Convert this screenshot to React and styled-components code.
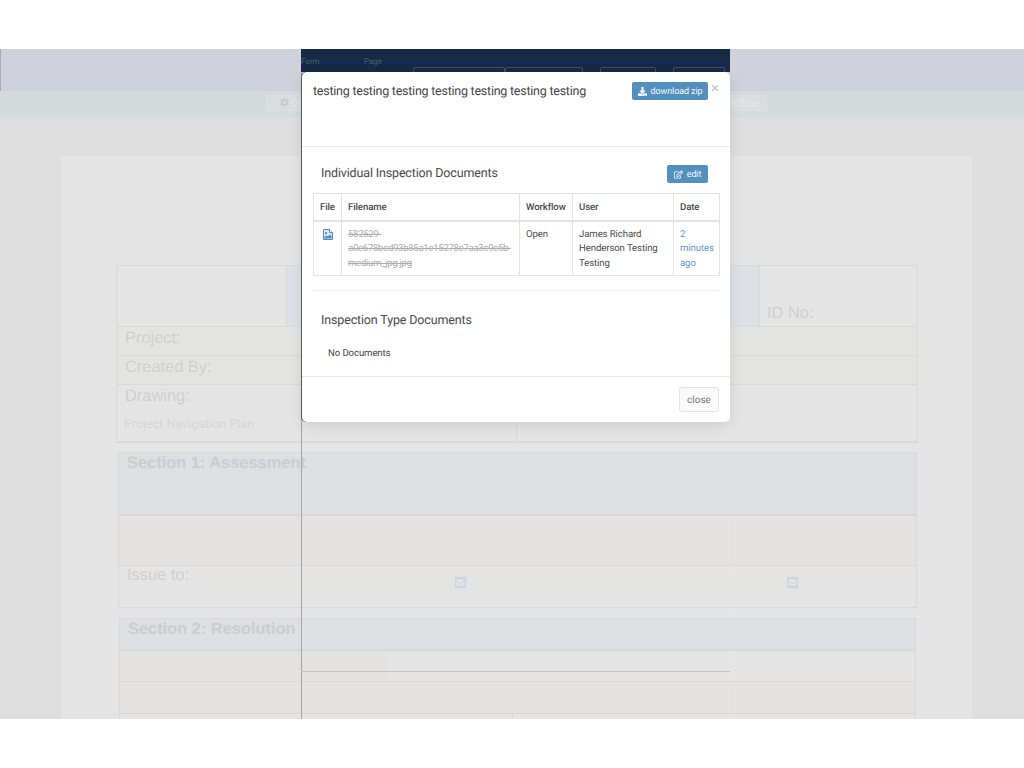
import styled, { createGlobalStyle } from "styled-components";
import { FaCog, FaDownload, FaEnvelopeSquare, FaRegEdit } from "react-icons/fa";

const GlobalStyle = createGlobalStyle`
  html, body {
    margin: 0;
    padding: 0;
    background: #fff;
    text-rendering: geometricPrecision;
  }
  * {
    box-sizing: border-box;
  }
`;

const Stage = styled.div`
  position: relative;
  height: 670px;
  margin: 49px 0;
  overflow: hidden;
  background: #dedede;
  font-family: "Liberation Sans", Arial, sans-serif;
`;

const TopBar = styled.div`
  height: 42px;
  background: #cfd2db;
  border-left: 1px solid #a9adb8;
`;

const SubBar = styled.div`
  height: 26px;
  background: #d5dadd;
  display: flex;
  justify-content: center;
  padding: 4px 257px 0 266px;
`;

const SubBarButton = styled.div`
  flex: 1;
  height: 16px;
  border: 1px solid #dde1e3;
  border-radius: 2px;
  background: #d9dde0;
  display: flex;
  align-items: center;
  justify-content: space-between;
  padding: 0 7px 0 13px;
  font: 11px Roboto, sans-serif;
  color: #e6e8ea;

  svg {
    color: #c9cdd0;
    font-size: 9px;
    margin-right: 3px;
  }
`;

const Paper = styled.div`
  width: 911px;
  height: 600px;
  margin: 39px 0 0 61px;
  background: #e4e4e4;
  padding: 109px 0 0 55px;
`;

const FormTable = styled.div`
  width: 802px;
  border: 1px solid #d9d9d9;
  border-bottom-width: 2px;
`;

const FormRow = styled.div`
  display: grid;
  grid-template-columns: ${(p) => p.$cols || "1fr"};
  height: ${(p) => p.$h}px;
  border-bottom: ${(p) => (p.$last ? "0" : "1px solid #d9d9d9")};
`;

const FormCell = styled.div`
  display: flex;
  flex-direction: ${(p) => (p.$stack ? "column" : "row")};
  align-items: ${(p) => (p.$end ? "flex-end" : "flex-start")};
  padding: ${(p) => (p.$end ? "0 7px 3px" : "2px 8px 0")};
  background: ${(p) => p.$bg || "transparent"};
  border-right: ${(p) => (p.$divide ? "1px solid #d9d9d9" : "0")};
  color: #cfcfcf;
  font-size: 16.4px;
  line-height: 19px;
`;

const FieldLabel = styled.span`
  white-space: nowrap;
`;

const PlanName = styled.div`
  margin: 11px 0 0 -1px;
  font: 12.5px Roboto, sans-serif;
  color: #d6d6d6;
`;

const Section = styled.div`
  width: ${(p) => p.$w}px;
  margin: ${(p) => p.$mt}px 0 0 ${(p) => p.$ml}px;
  border: 1px solid #d9d9d9;
`;

const SectionHead = styled.div`
  height: ${(p) => p.$h}px;
  background: #dddfe3;
  border-bottom: 2px solid #d6d8dd;
  padding-left: 8px;
  color: #cdcdcd;
  font-size: 16.4px;
  line-height: 21px;
  font-weight: 700;
`;

const IssueRow = styled.div`
  display: flex;
  height: 41px;
  padding: 0 8px;
  color: #cfcfcf;
  font-size: 16.4px;
  line-height: 19px;
`;

const IssueField = styled.div`
  height: 18px;
  width: ${(p) => p.$w}px;
  margin: 12px 0 0 ${(p) => p.$ml}px;
  background: #e3e4e1;
  display: flex;
  justify-content: flex-end;

  svg {
    color: #cdd3df;
    font-size: 13px;
    margin: -2px 0 0;
  }
`;

const PaneTop = styled.div`
  position: absolute;
  top: 0;
  left: 301px;
  width: 429px;
  height: 23px;
  background: #162a47;
  color: #4d5b72;
  font: 8px Roboto, sans-serif;
`;

const PaneLabel = styled.span`
  position: absolute;
  top: 8px;
  left: ${(p) => p.$x}px;
`;

const PaneButton = styled.span`
  position: absolute;
  top: 18px;
  left: ${(p) => p.$x}px;
  width: ${(p) => p.$w}px;
  height: 10px;
  border: 1px solid #3f4e65;
  border-radius: 2px;
`;

const PaneEdgeLeft = styled.div`
  position: absolute;
  top: 0;
  bottom: 0;
  left: 301px;
  width: 1px;
  background: #a5a5a8;
`;

const PaneEdgeRight = styled.div`
  position: absolute;
  top: 0;
  bottom: 0;
  left: 729px;
  width: 1px;
  background: rgba(255, 255, 255, 0.15);
`;

const PaneBottom = styled.div`
  position: absolute;
  top: 622px;
  left: 301px;
  width: 429px;
  height: 1px;
  background: #c4c4c4;
`;

const Modal = styled.div`
  position: absolute;
  top: 23px;
  left: 302px;
  width: 428px;
  height: 350px;
  background: #fff;
  border-radius: 5px;
  box-shadow: -1px 0 0 #55585f, 0 4px 14px rgba(0, 0, 0, 0.1);
  font-family: Roboto, sans-serif;
  color: #444;
`;

const ModalHeader = styled.div`
  position: relative;
  height: 75px;
  padding: 10px 22px 0 11px;
  border-bottom: 1px solid #e9e9e9;
  display: flex;
  justify-content: space-between;
  align-items: flex-start;
`;

const ModalTitle = styled.h4`
  margin: 0;
  font-size: 12.5px;
  letter-spacing: -0.24px;
  font-weight: 400;
  line-height: 19px;
  white-space: nowrap;
`;

const PrimaryButton = styled.div`
  display: flex;
  align-items: center;
  justify-content: center;
  gap: 4px;
  flex: none;
  width: ${(p) => p.$w}px;
  height: 18px;
  padding-top: 1px;
  background: #5390bd;
  border-radius: 2px;
  color: #f4f8fb;
  font-size: 9px;
  letter-spacing: -0.1px;
  white-space: nowrap;

  svg {
    font-size: 9px;
  }
`;

const CloseX = styled.span`
  position: absolute;
  top: 8px;
  right: 11px;
  font-size: 15px;
  line-height: 17px;
  color: #c6c6c6;
`;

const ModalBody = styled.div`
  height: 230px;
  padding: 18px 11px 0;
  border-bottom: 1px solid #e9e9e9;
`;

const SectionRow = styled.div`
  display: flex;
  justify-content: space-between;
  align-items: flex-start;
  padding: 0 11px 0 8px;
`;

const SectionTitle = styled.h5`
  margin: ${(p) => p.$mt || 0}px 0 0;
  padding-left: ${(p) => p.$pad || 0}px;
  font-size: 12.5px;
  letter-spacing: -0.15px;
  font-weight: 400;
  line-height: 17px;
  color: #4a4a4a;
`;

const DocTable = styled.table`
  width: 406px;
  margin-top: 10px;
  border-collapse: collapse;
  table-layout: fixed;
  font-size: 9.6px;
  letter-spacing: -0.1px;
  line-height: 14.5px;

  th, td {
    border: 1px solid #e3e3e3;
    padding: 6px 6px 4px;
    text-align: left;
    vertical-align: top;
    color: #4a4a4a;
  }

  th {
    height: 27px;
    padding: 7px 6px 3px;
    border-bottom-width: 2px;
    font-weight: 500;
  }
`;

const FileIcon = styled.svg`
  display: block;
  width: 10px;
  height: 11px;
  margin: 1px 0 0 3px;
`;

const StruckName = styled.span`
  color: #adadad;
  letter-spacing: -0.3px;
  text-decoration: line-through;
`;

const DateLink = styled.span`
  color: #5a97c7;
`;

const Divider = styled.div`
  height: 1px;
  margin-top: 14px;
  background: #eee;
`;

const EmptyNote = styled.p`
  margin: 18px 0 0 15px;
  line-height: 14px;
  font-size: 9.6px;
  letter-spacing: -0.1px;
`;

const ModalFooter = styled.div`
  display: flex;
  justify-content: flex-end;
  padding: 10px 11px 0;
`;

const CloseButton = styled.div`
  width: 40px;
  height: 25px;
  border: 1px solid #e3e3e3;
  border-radius: 3px;
  background: #fafafa;
  color: #777;
  font-size: 10px;
  line-height: 25px;
  text-align: center;
`;

const App = () => (
  <>
    <GlobalStyle />
    <Stage>
      <TopBar />
      <SubBar>
        <SubBarButton>
          <span>
            <FaCog />0%
          </span>
          <span>Workflow</span>
        </SubBarButton>
      </SubBar>
      <Paper>
        <FormTable>
          <FormRow $h={61} $cols="170px 473px 1fr">
            <FormCell $divide />
            <FormCell $divide $bg="#dcdfe4" />
            <FormCell $end>
              <FieldLabel>ID No:</FieldLabel>
            </FormCell>
          </FormRow>
          <FormRow $h={29}>
            <FormCell $bg="#e3e4e2">
              <FieldLabel>Project:</FieldLabel>
            </FormCell>
          </FormRow>
          <FormRow $h={29}>
            <FormCell $bg="#e3e4e2">
              <FieldLabel>Created By:</FieldLabel>
            </FormCell>
          </FormRow>
          <FormRow $h={56} $cols="400px 1fr" $last>
            <FormCell $stack $divide>
              <FieldLabel>Drawing:</FieldLabel>
              <PlanName>Project Navigation Plan</PlanName>
            </FormCell>
            <FormCell />
          </FormRow>
        </FormTable>
        <Section $w={799} $mt={9} $ml={2}>
          <SectionHead $h={63}>Section 1: Assessment</SectionHead>
          <FormRow $h={50}>
            <FormCell $bg="#e3e2e1" />
          </FormRow>
          <IssueRow>
            <FieldLabel>Issue to:</FieldLabel>
            <IssueField $w={260} $ml={18}>
              <FaEnvelopeSquare />
            </IssueField>
            <IssueField $w={316} $ml={16}>
              <FaEnvelopeSquare />
            </IssueField>
          </IssueRow>
        </Section>
        <Section $w={797} $mt={10} $ml={3}>
          <SectionHead $h={32}>Section 2: Resolution</SectionHead>
          <FormRow $h={31} $cols="268px 1fr">
            <FormCell $bg="#e3e2e1" />
            <FormCell />
          </FormRow>
          <FormRow $h={32}>
            <FormCell $bg="#e3e2e1" />
          </FormRow>
          <FormRow $h={20} $cols="393px 1fr" $last>
            <FormCell $divide />
            <FormCell />
          </FormRow>
        </Section>
      </Paper>

      <PaneEdgeLeft />
      <PaneEdgeRight />
      <PaneBottom />
      <PaneTop>
        <PaneLabel $x={0}>Form</PaneLabel>
        <PaneLabel $x={63}>Page</PaneLabel>
        <PaneButton $x={112} $w={92} />
        <PaneButton $x={204} $w={78} />
        <PaneButton $x={299} $w={56} />
        <PaneButton $x={372} $w={52} />
      </PaneTop>

      <Modal>
        <ModalHeader>
          <ModalTitle>testing testing testing testing testing testing testing</ModalTitle>
          <PrimaryButton $w={76}>
            <FaDownload />
            download zip
          </PrimaryButton>
          <CloseX>×</CloseX>
        </ModalHeader>
        <ModalBody>
          <SectionRow>
            <SectionTitle>Individual Inspection Documents</SectionTitle>
            <PrimaryButton $w={41}>
              <FaRegEdit />
              edit
            </PrimaryButton>
          </SectionRow>
          <DocTable>
            <colgroup>
              <col width="28" />
              <col width="178" />
              <col width="53" />
              <col width="101" />
              <col width="46" />
            </colgroup>
            <thead>
              <tr>
                <th>File</th>
                <th>Filename</th>
                <th>Workflow</th>
                <th>User</th>
                <th>Date</th>
              </tr>
            </thead>
            <tbody>
              <tr>
                <td>
                  <FileIcon viewBox="0 0 10 11">
                    <path d="M0.5 0.5H6.5L9.5 3.5V10.5H0.5Z" fill="#dce9f4" stroke="#4c8fc6" />
                    <path d="M6.5 0.5V3.5H9.5" fill="#fff" stroke="#4c8fc6" />
                    <circle cx="3" cy="4.2" r="1.1" fill="#4c8fc6" />
                    <path d="M1.5 9.5V8L3.5 6.5L5 7.5L7 5.5L8.5 7V9.5Z" fill="#4c8fc6" />
                  </FileIcon>
                </td>
                <td>
                  <StruckName>
                    582529-
                    <br />
                    a0e678bcd93b85a1e15278c7aa3c9c5b-
                    <br />
                    medium_jpg.jpg
                  </StruckName>
                </td>
                <td>Open</td>
                <td>James Richard Henderson Testing Testing</td>
                <td>
                  <DateLink>2 minutes ago</DateLink>
                </td>
              </tr>
            </tbody>
          </DocTable>
          <Divider />
          <SectionTitle $mt={21} $pad={8}>
            Inspection Type Documents
          </SectionTitle>
          <EmptyNote>No Documents</EmptyNote>
        </ModalBody>
        <ModalFooter>
          <CloseButton>close</CloseButton>
        </ModalFooter>
      </Modal>
    </Stage>
  </>
);

export default App;
